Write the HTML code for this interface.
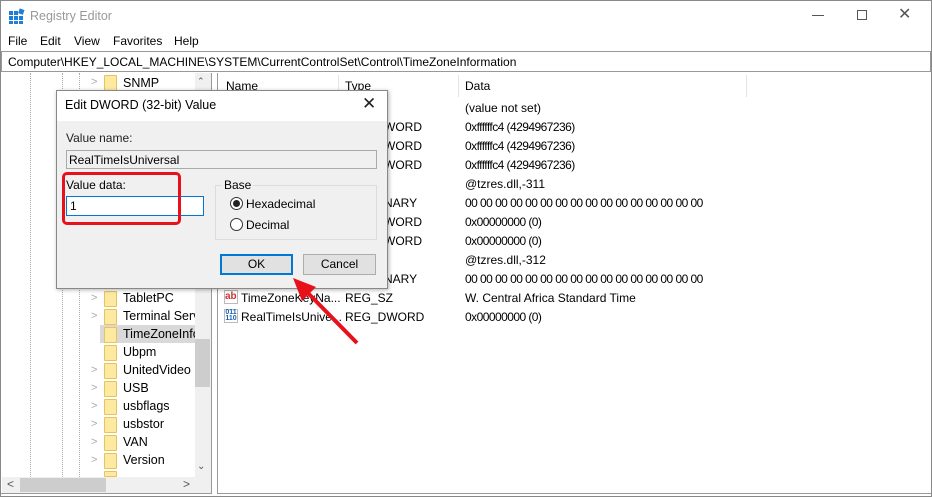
<!DOCTYPE html>
<html><head><style>
*{margin:0;padding:0;box-sizing:border-box}
body{width:932px;height:497px;overflow:hidden;background:#fff;font-family:"Liberation Sans",sans-serif;font-size:12px;color:#000;position:relative}
.a{position:absolute;white-space:nowrap}
.fold{position:absolute;width:13px;height:16px;background:#fde9a0;border:1px solid #e6c35c;border-radius:1px}
.chev{position:absolute;color:#aaa;font-size:11px}
.z{letter-spacing:-0.55px}
</style></head><body>
<div class="a" style="left:0;top:0;width:932px;height:497px;border:1px solid #888"></div>
<svg class="a" style="left:9px;top:8px" width="16" height="16"><g fill="#1e7fd8"><rect x="0" y="3" width="4" height="4"/><rect x="5" y="3" width="4" height="4"/><rect x="0" y="8" width="4" height="4"/><rect x="5" y="8" width="4" height="4"/><rect x="10" y="8" width="4" height="4"/><rect x="0" y="13" width="4" height="3"/><rect x="5" y="13" width="4" height="3"/><rect x="10" y="13" width="4" height="3"/><rect x="10" y="1" width="5" height="5" transform="rotate(20 12 3)"/></g></svg>
<div class="a" style="left:30px;top:9px;color:#999;font-size:12.5px">Registry Editor</div>
<div class="a" style="left:812px;top:15px;width:12px;height:1px;background:#555"></div>
<div class="a" style="left:857px;top:10px;width:10px;height:10px;border:1px solid #555"></div>
<div class="a" style="left:898px;top:4px;font-size:16px;color:#555">✕</div>
<div class="a" style="left:8px;top:34px">File</div>
<div class="a" style="left:40px;top:34px">Edit</div>
<div class="a" style="left:74px;top:34px">View</div>
<div class="a" style="left:113px;top:34px">Favorites</div>
<div class="a" style="left:174px;top:34px">Help</div>
<div class="a" style="left:1px;top:51px;width:930px;height:21px;border:1px solid #999;padding:3px 6px">Computer\HKEY_LOCAL_MACHINE\SYSTEM\CurrentControlSet\Control\TimeZoneInformation</div>
<div class="a" style="left:1px;top:73px;width:211px;height:421px;border-right:1px solid #999;border-bottom:1px solid #999"></div>
<div class="a" style="left:30px;top:73px;height:404px;border-left:1px dotted #aaa"></div>
<div class="a" style="left:62px;top:73px;height:404px;border-left:1px dotted #aaa"></div>
<div class="a" style="left:79px;top:73px;height:404px;border-left:1px dotted #aaa"></div>
<div class="a" style="left:100px;top:325px;width:95px;height:18px;background:#d9d9d9"></div>
<div class="chev" style="left:91px;top:76px">&gt;</div><div class="fold" style="left:104px;top:75px"></div><div class="a" style="left:123px;top:76px;font-size:12.5px">SNMP</div>
<div class="chev" style="left:91px;top:292px">&gt;</div><div class="fold" style="left:104px;top:291px"></div><div class="a" style="left:123px;top:291px;font-size:12.5px">TabletPC</div>
<div class="chev" style="left:91px;top:310px">&gt;</div><div class="fold" style="left:104px;top:309px"></div><div class="a" style="left:123px;top:309px;font-size:12.5px">Terminal Serv</div>
<div class="fold" style="left:104px;top:327px"></div><div class="a" style="left:123px;top:327px;font-size:12.5px">TimeZoneInfo</div>
<div class="fold" style="left:104px;top:345px"></div><div class="a" style="left:123px;top:345px;font-size:12.5px">Ubpm</div>
<div class="chev" style="left:91px;top:364px">&gt;</div><div class="fold" style="left:104px;top:363px"></div><div class="a" style="left:123px;top:363px;font-size:12.5px">UnitedVideo</div>
<div class="chev" style="left:91px;top:382px">&gt;</div><div class="fold" style="left:104px;top:381px"></div><div class="a" style="left:123px;top:381px;font-size:12.5px">USB</div>
<div class="chev" style="left:91px;top:400px">&gt;</div><div class="fold" style="left:104px;top:399px"></div><div class="a" style="left:123px;top:399px;font-size:12.5px">usbflags</div>
<div class="chev" style="left:91px;top:418px">&gt;</div><div class="fold" style="left:104px;top:417px"></div><div class="a" style="left:123px;top:417px;font-size:12.5px">usbstor</div>
<div class="chev" style="left:91px;top:436px">&gt;</div><div class="fold" style="left:104px;top:435px"></div><div class="a" style="left:123px;top:435px;font-size:12.5px">VAN</div>
<div class="chev" style="left:91px;top:454px">&gt;</div><div class="fold" style="left:104px;top:453px"></div><div class="a" style="left:123px;top:453px;font-size:12.5px">Version</div>
<div class="fold" style="left:104px;top:471px;height:6px"></div>
<div class="a" style="left:195px;top:73px;width:16px;height:404px;background:#f0f0f0"></div>
<div class="a" style="left:195px;top:339px;width:15px;height:48px;background:#cdcdcd"></div>
<div class="a" style="left:197px;top:76px;font-size:9px;color:#555">⌃</div>
<div class="a" style="left:197px;top:461px;font-size:10px;color:#555">⌄</div>
<div class="a" style="left:2px;top:477px;width:209px;height:16px;background:#f0f0f0"></div>
<div class="a" style="left:20px;top:478px;width:86px;height:14px;background:#cdcdcd"></div>
<div class="a" style="left:7px;top:477px;color:#555">&lt;</div>
<div class="a" style="left:183px;top:477px;color:#555">&gt;</div>
<div class="a" style="left:217px;top:73px;width:714px;height:421px;border-left:1px solid #999;border-bottom:1px solid #999"></div>
<div class="a" style="left:338px;top:75px;height:22px;border-left:1px solid #e5e5e5"></div>
<div class="a" style="left:458px;top:75px;height:22px;border-left:1px solid #e5e5e5"></div>
<div class="a" style="left:746px;top:75px;height:22px;border-left:1px solid #e5e5e5"></div>
<div class="a" style="left:226px;top:79px">Name</div>
<div class="a" style="left:345px;top:79px">Type</div>
<div class="a" style="left:465px;top:79px">Data</div>
<div class="a" style="left:465px;top:101px">(value not set)</div>
<div class="a" style="left:384px;top:120px">WORD</div><div class="a z" style="left:465px;top:120px">0xffffffc4 (4294967236)</div>
<div class="a" style="left:384px;top:139px">WORD</div><div class="a z" style="left:465px;top:139px">0xffffffc4 (4294967236)</div>
<div class="a" style="left:384px;top:158px">WORD</div><div class="a z" style="left:465px;top:158px">0xffffffc4 (4294967236)</div>
<div class="a" style="left:465px;top:177px">@tzres.dll,-311</div>
<div class="a" style="left:384px;top:196px">NARY</div><div class="a z" style="left:465px;top:196px">00 00 00 00 00 00 00 00 00 00 00 00 00 00 00 00</div>
<div class="a" style="left:384px;top:215px">WORD</div><div class="a z" style="left:465px;top:215px">0x00000000 (0)</div>
<div class="a" style="left:384px;top:234px">WORD</div><div class="a z" style="left:465px;top:234px">0x00000000 (0)</div>
<div class="a" style="left:465px;top:253px">@tzres.dll,-312</div>
<div class="a" style="left:384px;top:272px">NARY</div><div class="a z" style="left:465px;top:272px">00 00 00 00 00 00 00 00 00 00 00 00 00 00 00 00</div>
<div class="a" style="left:224px;top:290px;width:14px;height:14px;border:1px solid #bbb;color:#c33;font-size:10px;font-weight:bold;line-height:11px">ab</div>
<div class="a" style="left:241px;top:291px">TimeZoneKeyNa...</div><div class="a" style="left:345px;top:291px">REG_SZ</div><div class="a" style="left:465px;top:291px">W. Central Africa Standard Time</div>
<div class="a" style="left:224px;top:309px;width:14px;height:14px;border:1px solid #bbb;color:#1a5fb4;font-size:7px;font-weight:bold;line-height:6px;text-align:center">011<br>110</div>
<div class="a" style="left:241px;top:310px">RealTimeIsUnive...</div><div class="a" style="left:345px;top:310px">REG_DWORD</div><div class="a z" style="left:465px;top:310px">0x00000000 (0)</div>
<div class="a" style="left:56px;top:90px;width:332px;height:199px;background:#f0f0f0;border:1px solid #888;box-shadow:1px 1px 4px rgba(0,0,0,.3)"></div>
<div class="a" style="left:57px;top:91px;width:330px;height:30px;background:#fff"></div>
<div class="a" style="left:65px;top:98px;font-size:12.5px">Edit DWORD (32-bit) Value</div>
<div class="a" style="left:362px;top:94px;font-size:17px;color:#222">✕</div>
<div class="a" style="left:66px;top:131px;color:#222">Value name:</div>
<div class="a" style="left:66px;top:150px;width:311px;height:19px;background:#f0f0f0;border:1px solid #aaa;padding:2px 2px">RealTimeIsUniversal</div>
<div class="a" style="left:66px;top:178px">Value data:</div>
<div class="a" style="left:66px;top:196px;width:138px;height:20px;background:#fff;border:1px solid #0078d7;padding:2px 3px">1</div>
<div class="a" style="left:62px;top:172px;width:119px;height:53px;border:3px solid #e8101a;border-radius:5px"></div>
<div class="a" style="left:215px;top:185px;width:162px;height:55px;border:1px solid #dcdcdc"></div>
<div class="a" style="left:222px;top:178px;background:#f0f0f0;padding:0 2px">Base</div>
<div class="a" style="left:230px;top:197px;width:13px;height:13px;border:1px solid #333;border-radius:50%;background:#fff"></div>
<div class="a" style="left:233px;top:200px;width:7px;height:7px;border-radius:50%;background:#222"></div>
<div class="a" style="left:246px;top:197px">Hexadecimal</div>
<div class="a" style="left:230px;top:218px;width:13px;height:13px;border:1px solid #333;border-radius:50%;background:#fff"></div>
<div class="a" style="left:246px;top:218px">Decimal</div>
<div class="a" style="left:220px;top:254px;width:73px;height:21px;background:#e1e1e1;border:2px solid #0078d7;text-align:center;line-height:17px">OK</div>
<div class="a" style="left:303px;top:254px;width:73px;height:21px;background:#e1e1e1;border:1px solid #adadad;text-align:center;line-height:19px">Cancel</div>
<svg class="a" style="left:0;top:0" width="932" height="497"><line x1="357" y1="343" x2="305" y2="290" stroke="#e8101a" stroke-width="4"/><polygon points="293,278 316,287 302,301" fill="#e8101a"/></svg>
</body></html>
